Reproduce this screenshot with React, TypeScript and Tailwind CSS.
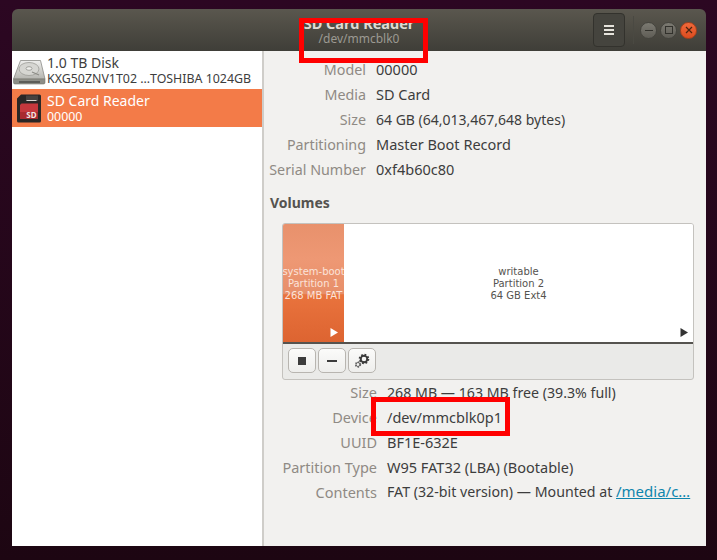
const font = { fontFamily: '"Noto Sans", sans-serif' };

function DiskIcon() {
  return (
    <svg width="33" height="33" viewBox="0 0 33 33" className="shrink-0">
      <defs>
        <linearGradient id="disk" x1="0" y1="0" x2="0" y2="1">
          <stop offset="0" stopColor="#eeeeec" />
          <stop offset="1" stopColor="#b5b5b0" />
        </linearGradient>
      </defs>
      <path d="M7.500 6.500h20l4.500 18.500H0.500z" fill="url(#disk)" stroke="#8a8a86" strokeWidth="0.800" />
      <path d="M0.500 25h31.500v3.500a1.500 1.500 0 0 1-1.500 1.500H2a1.500 1.500 0 0 1-1.500-1.500z" fill="#8d8d87" stroke="#77776f" strokeWidth="0.600" />
      <path d="M6 28h21" stroke="#2e2e2b" strokeWidth="1.200" />
      <ellipse cx="16" cy="15" rx="10" ry="6.500" fill="#d6d6d2" stroke="#9c9c97" strokeWidth="0.800" />
      <ellipse cx="16" cy="14.500" rx="3" ry="1.800" fill="#efefec" stroke="#92928d" strokeWidth="0.800" />
      <path d="M26 21l-7-3" stroke="#8c8c87" strokeWidth="1.200" />
    </svg>
  );
}

function SdIcon() {
  return (
    <svg width="33" height="33" viewBox="0 0 33 33" className="shrink-0">
      <path d="M8 2.500h18.500a1.500 1.500 0 0 1 1.500 1.500v25a1.500 1.500 0 0 1-1.500 1.500h-21a1.500 1.500 0 0 1-1.500-1.500V6.500z" fill="#2a2726" />
      <path d="M8.500 11.500h16.500v15.500H7V13z" fill="#c5383d" />
      <path d="M7 20h18v7H7z" fill="#a92a30" />
      <path d="M13 3.500h12v5.500H13z" fill="#45413f" />
      <path d="M13.500 8.500h10" stroke="#d8d5d0" strokeWidth="1" />
      <text x="18.500" y="26" textAnchor="middle" fontSize="8" fontWeight="700" fill="#f4e6e4" style={font}>
        SD
      </text>
    </svg>
  );
}

function GearIcon() {
  return (
    <svg width="20" height="20" viewBox="0 0 20 20">
      <circle cx="12" cy="8" r="3.900" fill="none" stroke="#3c3c3c" strokeWidth="2.800" strokeDasharray="1.530 1.530" />
      <circle cx="12" cy="8" r="3.300" fill="none" stroke="#3c3c3c" strokeWidth="1.900" />
      <circle cx="6" cy="13.500" r="2.300" fill="none" stroke="#666666" strokeWidth="1.800" strokeDasharray="1.200 1.200" />
      <circle cx="6" cy="13.500" r="2" fill="none" stroke="#666666" strokeWidth="1" />
    </svg>
  );
}

function Triangle({ className }: { className: string }) {
  return (
    <svg width="8" height="9" viewBox="0 0 8 9" className={className}>
      <path d="M0.500 0v9L8 4.500z" fill="currentColor" />
    </svg>
  );
}

function InfoRow({ label, value, labelWidth }: { label: string; value: React.ReactNode; labelWidth: string }) {
  return (
    <div className="flex h-[25px] items-center">
      <div className={`${labelWidth} shrink-0 whitespace-nowrap pr-[10px] text-right text-[#8f8a84]`}>{label}</div>
      <div className="whitespace-nowrap text-[#3d3d3d]">{value}</div>
    </div>
  );
}

function ToolButton({ children }: { children: React.ReactNode }) {
  return (
    <button className="flex h-[25px] w-[28px] items-center justify-center rounded-[5px] border border-[#b8b5b0] bg-gradient-to-b from-[#fbfbfa] to-[#eeeeec]">
      {children}
    </button>
  );
}

export default function App() {
  const topLabel = 'w-[112px] pt-[2px] text-[14.300px]';
  const bottomLabel = 'w-[123px]';

  return (
    <div
      style={font}
      className="h-[560px] w-[717px] overflow-hidden bg-gradient-to-b from-[#2c0722] to-[#1d0612] pl-[12px] pt-[9px] text-[14.500px] leading-[20px]"
    >
      <div className="relative flex h-[537px] w-[694px] flex-col overflow-hidden rounded-t-[6px]">
        {/* Header bar */}
        <div className="grid h-[42px] shrink-0 grid-cols-[1fr_auto_1fr] items-center bg-gradient-to-b from-[#5a574e] to-[#3f3e38]">
          <div />
          <div className="text-center">
            <div className="text-[14.500px] font-bold leading-[18px] text-[#dfdbd2]">SD Card Reader</div>
            <div className="text-[12px] leading-[14px] text-[#9c9a92]">/dev/mmcblk0</div>
          </div>
          <div className="flex items-center justify-end pr-[9px]">
            <button className="flex h-[34px] w-[32px] flex-col items-center justify-center gap-[2px] rounded-[4px] border border-[#33322d] bg-[#45443e]">
              <span className="h-[2px] w-[10px] bg-[#e6e3dc]" />
              <span className="h-[2px] w-[10px] bg-[#e6e3dc]" />
              <span className="h-[2px] w-[10px] bg-[#e6e3dc]" />
            </button>
            <div className="ml-[8px] mr-[6px] h-[28px] w-px bg-[#4a4942]" />
            <div className="flex gap-[3px]">
              <div className="flex h-[17px] w-[17px] items-center justify-center rounded-full border border-[#45443e] bg-gradient-to-b from-[#7c7a72] to-[#5f5d56]">
                <span className="h-[1px] w-[8px] bg-[#32312c]" />
              </div>
              <div className="flex h-[17px] w-[17px] items-center justify-center rounded-full border border-[#45443e] bg-gradient-to-b from-[#7c7a72] to-[#5f5d56]">
                <span className="h-[8px] w-[8px] border border-[#32312c]" />
              </div>
              <div className="flex h-[17px] w-[17px] items-center justify-center rounded-full border border-[#a8401b] bg-gradient-to-b from-[#f0693a] to-[#dc4c1f]">
                <svg width="8" height="8" viewBox="0 0 8 8">
                  <path d="M1 1l6 6M7 1l-6 6" stroke="#4a2410" strokeWidth="1.200" />
                </svg>
              </div>
            </div>
          </div>
        </div>

        <div className="flex min-h-0 flex-1">
          {/* Sidebar */}
          <div className="w-[250px] shrink-0 bg-white">
            <div className="flex h-[38px] items-center pl-[1px] text-[#3d3d3d]">
              <DiskIcon />
              <div className="ml-[1px] whitespace-nowrap pb-[2px]">
                <div className="text-[14px] leading-[18px]">1.0 TB Disk</div>
                <div className="text-[12.400px] leading-[13px]">KXG50ZNV1T02 …TOSHIBA 1024GB</div>
              </div>
            </div>
            <div className="flex h-[38px] items-center bg-[#f37b48] pl-[1px] text-white">
              <SdIcon />
              <div className="ml-[1px] whitespace-nowrap pb-[2px]">
                <div className="text-[14px] leading-[18px]">SD Card Reader</div>
                <div className="text-[12.400px] leading-[13px]">00000</div>
              </div>
            </div>
          </div>
          <div className="w-[2px] shrink-0 bg-[#cfcdc9]" />

          {/* Details */}
          <div className="min-w-0 flex-1 bg-[#f2f1ef]">
            <div className="pt-[5px]">
              <InfoRow labelWidth={topLabel} label="Model" value="00000" />
              <InfoRow labelWidth={topLabel} label="Media" value="SD Card" />
              <InfoRow
                labelWidth={topLabel}
                label="Size"
                value={<span className="block pt-[2px] text-[14px]">64 GB (64,013,467,648 bytes)</span>}
              />
              <InfoRow labelWidth={topLabel} label="Partitioning" value="Master Boot Record" />
              <InfoRow labelWidth={topLabel} label="Serial Number" value="0xf4b60c80" />
            </div>
            <div className="mt-[12px] pl-[6px] text-[14px] font-bold leading-[20px] text-[#55534f]">Volumes</div>

            <div className="ml-[18px] mt-[10px] h-[157px] w-[412px] overflow-hidden rounded-[3px] border border-[#c4c2be] bg-[#eaeae8]">
              <div
                className="flex h-[120px] border-b-2 border-[#55534f] text-center text-[10px] leading-[12px]"
                style={{ fontFamily: '"DejaVu Sans", sans-serif' }}
              >
                <div className="relative flex w-[61px] shrink-0 items-center justify-center bg-[linear-gradient(to_bottom,#e8916c_0%,#ee9874_30%,#e78f6a_59%,#e9733d_60%,#dd6431_100%)] pt-[2px] text-[#fbe3da]">
                  <div className="whitespace-nowrap">
                    system-boot
                    <br />
                    Partition 1
                    <br />
                    268 MB FAT
                  </div>
                  <Triangle className="absolute bottom-[5px] right-[6px] text-white" />
                </div>
                <div className="relative flex flex-1 items-center justify-center bg-white pt-[2px] text-[#55534f]">
                  <div>
                    writable
                    <br />
                    Partition 2
                    <br />
                    64 GB Ext4
                  </div>
                  <Triangle className="absolute bottom-[5px] right-[5px] text-[#333333]" />
                </div>
              </div>
              <div className="flex gap-[2px] pl-[5px] pt-[4px]">
                <ToolButton>
                  <span className="h-[8px] w-[8px] bg-[#3c3c3c]" />
                </ToolButton>
                <ToolButton>
                  <span className="h-[2px] w-[10px] bg-[#3c3c3c]" />
                </ToolButton>
                <ToolButton>
                  <GearIcon />
                </ToolButton>
              </div>
            </div>

            <div className="-mt-[1px]">
              <InfoRow
                labelWidth={bottomLabel}
                label="Size"
                value={<span className="block pt-[2px] text-[14.200px]">268 MB — 163 MB free (39.3% full)</span>}
              />
              <InfoRow labelWidth={bottomLabel} label="Device" value="/dev/mmcblk0p1" />
              <InfoRow labelWidth={bottomLabel} label="UUID" value="BF1E-632E" />
              <InfoRow labelWidth={bottomLabel} label="Partition Type" value="W95 FAT32 (LBA) (Bootable)" />
              <InfoRow
                labelWidth={bottomLabel}
                label="Contents"
                value={
                  <span className="text-[14.200px]">
                    FAT (32-bit version) — Mounted at <span className="text-[15px] text-[#0f85ad] underline">/media/c…</span>
                  </span>
                }
              />
            </div>
          </div>
        </div>

        {/* Red annotation boxes drawn over the screenshot */}
        <div className="absolute left-[287px] top-[9px] h-[45px] w-[129px] border-[5px] border-[#ff0000]" />
        <div className="absolute left-[359px] top-[388px] h-[39px] w-[139px] border-[5px] border-[#ff0000]" />
      </div>
    </div>
  );
}
